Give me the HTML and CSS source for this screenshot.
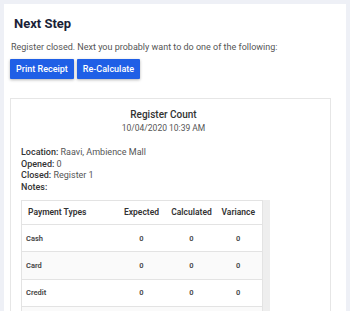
FILE: index.html
```html
<!DOCTYPE html>
<html lang="en">
<head>
    <meta charset="UTF-8">
    <meta name="viewport" content="width=device-width, initial-scale=1.0">
    <title>Next Step</title>
    <link rel="stylesheet" href="styles.css">
</head>
<body>
    <div class="panel">
        <h2>Next Step</h2>
        <p class="lead">Register closed. Next you probably want to do one of the following:</p>
        <div class="actions">
            <button>Print Receipt</button>
            <button>Re-Calculate</button>
        </div>

        <div class="report">
            <div class="report-head">
                <div class="report-title">Register Count</div>
                <div class="report-date">10/04/2020 10:39 AM</div>
            </div>
            <div class="meta">
                <div><b>Location:</b> Raavi, Ambience Mall</div>
                <div><b>Opened:</b> 0</div>
                <div><b>Closed:</b> Register 1</div>
                <div><b>Notes:</b></div>
            </div>
            <div class="table-wrap">
                <table class="counts">
                    <thead>
                        <tr>
                            <th class="type">Payment Types</th>
                            <th class="col-exp">Expected</th>
                            <th class="col-calc">Calculated</th>
                            <th class="col-var">Variance</th>
                        </tr>
                    </thead>
                    <tbody>
                        <tr><td class="type">Cash</td><td>0</td><td>0</td><td class="col-var">0</td></tr>
                        <tr><td class="type">Card</td><td>0</td><td>0</td><td class="col-var">0</td></tr>
                        <tr><td class="type">Credit</td><td>0</td><td>0</td><td class="col-var">0</td></tr>
                        <tr><td class="type"></td><td></td><td></td><td class="col-var"></td></tr>
                    </tbody>
                </table>
                <div class="scroll-track"></div>
            </div>
        </div>
    </div>
</body>
</html>
```

FILE: styles.css
```css
body {
    font-family: Roboto, Arial, sans-serif;
    background-color: #eef0f6;
    margin: 0;
    padding: 4px;
    height: 311px;
    box-sizing: border-box;
    overflow: hidden;
}
.panel {
    background: #fff;
    width: 342px;
    box-sizing: border-box;
    padding: 12px 15px 20px 6px;
    min-height: 400px;
}
h2 {
    margin: 0 0 0 4px;
    font-size: 13px;
    line-height: 16px;
    color: #1b1f38;
}
.lead {
    margin: 9px 0 0 1px;
    font-size: 9px;
    line-height: 12px;
    color: #555;
}
.actions {
    display: flex;
    gap: 3px;
    margin-top: 6px;
}
button {
    height: 20px;
    padding: 0 6px;
    font-family: Roboto, Arial, sans-serif;
    font-size: 9px;
    font-weight: 500;
    background-color: #1f5fe6;
    color: #fff;
    border: none;
    border-radius: 1px;
    box-shadow: 0 1px 3px rgba(0, 0, 0, 0.3);
}
.report {
    margin-top: 19px;
    border: 1px solid #e6e6e6;
    padding: 9px 24px 0 10px;
}
.report-head {
    text-align: center;
}
.report-title {
    font-size: 10px;
    font-weight: 500;
    line-height: 13px;
    color: #333;
}
.report-date {
    font-size: 8.5px;
    line-height: 14px;
    color: #555;
}
.meta {
    margin-top: 12px;
    font-size: 9px;
    line-height: 11.7px;
    color: #555;
}
.meta b {
    font-weight: 500;
    color: #333;
}
.table-wrap {
    display: flex;
    margin-top: 6px;
    width: 249px;
}
.counts {
    width: 242px;
    table-layout: fixed;
    border-collapse: collapse;
    border: 1px solid #e3e3e3;
}
.counts th {
    height: 23px;
    font-size: 8.5px;
    font-weight: 600;
    color: #333;
    text-align: center;
    border-bottom: 1px solid #e3e3e3;
    padding: 0;
}
.counts td {
    height: 26.4px;
    font-size: 7.5px;
    font-weight: 600;
    color: #444;
    text-align: center;
    border-bottom: 1px solid #e3e3e3;
    padding: 0;
}
.counts th.type {
    width: 97px;
    text-align: left;
    padding-left: 6px;
    box-sizing: border-box;
}
.counts td.type {
    text-align: left;
    padding-left: 4px;
}
.counts .col-exp {
    width: 46px;
}
.counts .col-calc {
    width: 54px;
}
.counts .col-var {
    padding-right: 4px;
}
.counts tbody tr:nth-child(even) {
    background-color: #fafafa;
}
.scroll-track {
    width: 7px;
    background-color: #eeeeee;
}
```
